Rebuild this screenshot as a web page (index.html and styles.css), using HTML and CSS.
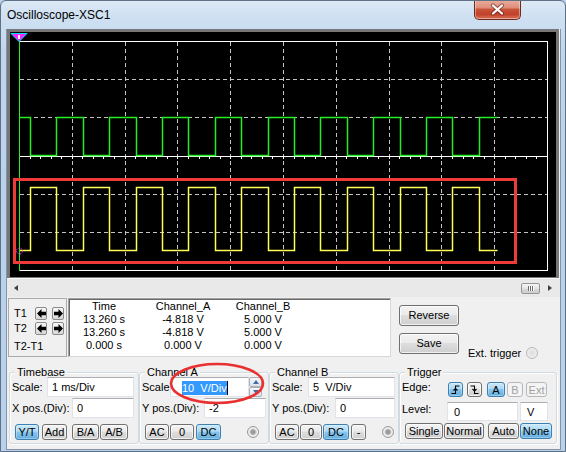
FILE: index.html
```html
<!DOCTYPE html>
<html>
<head>
<meta charset="utf-8">
<title>Oscilloscope-XSC1</title>
<link rel="stylesheet" href="styles.css">
</head>
<body>
<div class="window">
  <div class="titlebar">
    <span class="title">Oscilloscope-XSC1</span>
    <div class="close">
      <svg width="45" height="19" viewBox="0 0 45 19">
        <path d="M18 5.5 L27 13.5 M27 5.5 L18 13.5" stroke="#5a1c12" stroke-width="4.2" stroke-linecap="round" opacity="0.55" fill="none"/>
        <path d="M18 5.5 L27 13.5 M27 5.5 L18 13.5" stroke="#ffffff" stroke-width="2.2" stroke-linecap="round" fill="none"/>
      </svg>
    </div>
  </div>

  <div class="client">
    <div class="screen">
      <svg width="545" height="245" viewBox="0 0 545 245" shape-rendering="crispEdges">
        <g stroke="#c4c4c4" stroke-width="1" stroke-dasharray="4 3" fill="none">
          <path d="M62.5 10V238 M115.5 10V238 M167.5 10V238 M220.5 10V238 M273.5 10V238 M326.5 10V238 M379.5 10V238 M431.5 10V238 M484.5 10V238"/>
          <path d="M10 47.5H537 M10 85.5H537 M10 162.5H537 M10 200.5H537"/>
        </g>
        <path d="M9.5 124.5H537.5" stroke="#ffffff" stroke-width="1" fill="none"/>
        <path d="M9 126H537" stroke="#ffffff" stroke-width="2" stroke-dasharray="1 9.56" fill="none"/>
        <path d="M9.5 9.5H537.5V238.5H9.5" stroke="#ffffff" stroke-width="1" fill="none"/>
        <path d="M9.5 85.5H20.5V123.5H46.5V85.5H73.5V123.5H99.5V85.5H126.5V123.5H152.5V85.5H178.5V123.5H205.5V85.5H231.5V123.5H258.5V85.5H284.5V123.5H310.5V85.5H337.5V123.5H363.5V85.5H390.5V123.5H416.5V85.5H442.5V123.5H469.5V85.5H487.5" stroke="#22ee22" stroke-width="1.5" fill="none" shape-rendering="auto"/>
        <path d="M9.5 218.5H20.5V155.5H46.5V218.5H73.5V155.5H99.5V218.5H126.5V155.5H152.5V218.5H178.5V155.5H205.5V218.5H231.5V155.5H258.5V218.5H284.5V155.5H310.5V218.5H337.5V155.5H363.5V218.5H390.5V155.5H416.5V218.5H442.5V155.5H469.5V218.5H487.5" stroke="#ffff55" stroke-width="1.5" fill="none" shape-rendering="auto"/>
        <path d="M9.5 9V238.5" stroke="#22ee22" stroke-width="1" fill="none"/>
        <rect x="4.5" y="147" width="501" height="83.5" stroke="#f03a3a" stroke-width="3" fill="none"/>
        <circle cx="9.5" cy="219" r="3" stroke="#ff30ff" stroke-width="1" stroke-dasharray="1.5 1" fill="none" shape-rendering="auto"/>
        <polygon points="1,1.5 17,1.5 9,9.5" fill="#ff22ff" stroke="#00e0ff" stroke-width="1" shape-rendering="auto"/>
        <rect x="8" y="2.5" width="2" height="4" fill="#ffffff"/>
      </svg>
    </div>

    <div class="hscroll">
      <span class="sarrow left"></span>
      <span class="thumb"><i></i><i></i><i></i></span>
      <span class="sarrow right"></span>
    </div>

    <div class="panel">
      <div class="toprow">
        <div class="cursors">
          <div class="crow">
            <span class="clabel">T1</span>
            <span class="abtn"><svg width="9" height="9" viewBox="0 0 9 9"><polygon points="0,4.5 4.5,0 4.5,2.8 9,2.8 9,6.2 4.5,6.2 4.5,9" fill="#000"/></svg></span>
            <span class="abtn"><svg width="9" height="9" viewBox="0 0 9 9"><polygon points="9,4.5 4.5,0 4.5,2.8 0,2.8 0,6.2 4.5,6.2 4.5,9" fill="#000"/></svg></span>
          </div>
          <div class="crow">
            <span class="clabel">T2</span>
            <span class="abtn"><svg width="9" height="9" viewBox="0 0 9 9"><polygon points="0,4.5 4.5,0 4.5,2.8 9,2.8 9,6.2 4.5,6.2 4.5,9" fill="#000"/></svg></span>
            <span class="abtn"><svg width="9" height="9" viewBox="0 0 9 9"><polygon points="9,4.5 4.5,0 4.5,2.8 0,2.8 0,6.2 4.5,6.2 4.5,9" fill="#000"/></svg></span>
          </div>
          <div class="crow diff">T2-T1</div>
        </div>

        <div class="readout">
          <div class="rrow"><span>Time</span><span>Channel_A</span><span>Channel_B</span></div>
          <div class="rrow"><span>13.260 s</span><span>-4.818 V</span><span>5.000 V</span></div>
          <div class="rrow"><span>13.260 s</span><span>-4.818 V</span><span>5.000 V</span></div>
          <div class="rrow"><span>0.000 s</span><span>0.000 V</span><span>0.000 V</span></div>
        </div>

        <div class="actions">
          <div class="btn big">Reverse</div>
          <div class="btn big">Save</div>
        </div>

        <div class="ext">
          <span>Ext. trigger</span>
          <span class="radio"></span>
        </div>
      </div>

      <div class="groups">
        <div class="group">
          <div class="gtitle">Timebase</div>
          <div class="frow">
            <span class="lbl w35">Scale:</span>
            <span class="field w87">1 ms/Div</span>
          </div>
          <div class="frow">
            <span class="lbl w60">X pos.(Div):</span>
            <span class="field w62">0</span>
          </div>
          <div class="brow">
            <span class="btn on w24 ml3">Y/T</span>
            <span class="btn w25 ml3">Add</span>
            <span class="btn w27 ml5">B/A</span>
            <span class="btn w28 ml1">A/B</span>
          </div>
        </div>

        <div class="group">
          <div class="gtitle">Channel A</div>
          <div class="frow">
            <span class="lbl w28">Scale:</span>
            <span class="field sel w79"><span class="hl">10&nbsp; V/Div</span></span>
            <span class="spin">
              <span><svg width="6" height="4" viewBox="0 0 6 4"><polygon points="0,4 3,0 6,4" fill="#3d6fa6"/></svg></span>
              <span><svg width="6" height="4" viewBox="0 0 6 4"><polygon points="0,0 6,0 3,4" fill="#3d6fa6"/></svg></span>
            </span>
          </div>
          <div class="frow">
            <span class="lbl w62">Y pos.(Div):</span>
            <span class="field w62">-2</span>
          </div>
          <div class="brow">
            <span class="btn w24 ml3">AC</span>
            <span class="btn w24 ml1">0</span>
            <span class="btn on w25 ml2">DC</span>
            <span class="knob ml26"></span>
          </div>
        </div>

        <div class="group">
          <div class="gtitle">Channel B</div>
          <div class="frow">
            <span class="lbl w36">Scale:</span>
            <span class="field w87">5&nbsp; V/Div</span>
          </div>
          <div class="frow">
            <span class="lbl w63">Y pos.(Div):</span>
            <span class="field w60">0</span>
          </div>
          <div class="brow">
            <span class="btn w24 ml3">AC</span>
            <span class="btn w22 ml1">0</span>
            <span class="btn on w26 ml1">DC</span>
            <span class="btn w15 ml2">-</span>
            <span class="knob ml16"></span>
          </div>
        </div>

        <div class="group trig">
          <div class="gtitle">Trigger</div>
          <div class="frow edge">
            <span class="lbl w45 mid">Edge:</span>
            <span class="btn on e w15 ml1"><svg width="9" height="9" viewBox="0 0 9 9"><path d="M0.5 8.5H4.5V1H8.5 M2.5 5.5L4.5 3.5L6.5 5.5" stroke="#000" stroke-width="1.1" fill="none"/></svg></span>
            <span class="btn e w15 ml4"><svg width="9" height="9" viewBox="0 0 9 9"><path d="M0.5 1H4.5V8.5H8.5 M2.5 4L4.5 6L6.5 4" stroke="#000" stroke-width="1.1" fill="none"/></svg></span>
            <span class="btn on e w18 ml5">A</span>
            <span class="btn off e w16 ml2">B</span>
            <span class="btn off e w21 ml3">Ext</span>
          </div>
          <div class="frow level">
            <span class="lbl w45 top">Level:</span>
            <span class="field lv w71">0</span>
            <span class="field lv unit w28 ml2">V</span>
          </div>
          <div class="brow tb2">
            <span class="btn w38 ml3">Single</span>
            <span class="btn w40 ml1">Normal</span>
            <span class="btn w31 ml4">Auto</span>
            <span class="btn on w32 ml1">None</span>
          </div>
        </div>
      </div>
    </div>

    <svg class="mark" width="102" height="50" viewBox="0 0 102 50">
      <ellipse cx="51" cy="23.5" rx="46" ry="19.5" stroke="#e8302f" stroke-width="2.6" fill="none"/>
    </svg>
  </div>
</div>
</body>
</html>
```

FILE: styles.css
```css
* { box-sizing: border-box; }

html, body { margin: 0; padding: 0; }

body {
  width: 566px;
  height: 452px;
  overflow: hidden;
  background: #b9d1ea;
  font-family: "Liberation Sans", Arial, sans-serif;
  font-size: 11px;
  color: #000;
}

.window {
  width: 566px;
  height: 452px;
  border: 1px solid #5e7185;
  border-radius: 6px 6px 0 0;
  background: linear-gradient(180deg, #dce8f5 0px, #cfe0f2 16px, #c1d6ed 50px, #b9d1ea 200px, #b9d1ea 100%);
  padding: 0 4px 1px 5px;
  display: flex;
  flex-direction: column;
  overflow: hidden;
}

/* title bar */
.titlebar {
  flex: none;
  height: 28px;
  display: flex;
  align-items: flex-start;
  justify-content: space-between;
}
.title {
  font-size: 12px;
  line-height: 28px;
  padding-left: 1px;
}
.close {
  width: 47px;
  height: 20px;
  margin-top: -1px;
  margin-right: 40px;
  border: 1px solid #6b2b20;
  border-top: none;
  border-radius: 0 0 5px 5px;
  background: linear-gradient(180deg, #e9ae9f 0%, #de8e7a 40%, #c8533a 50%, #c0412a 75%, #d97258 100%);
  box-shadow: inset 0 0 0 1px rgba(255, 236, 230, 0.45);
}
.close svg { display: block; }

/* client area */
.client {
  position: relative;
  flex: none;
  height: 421px;
  border: 1px solid #8394a8;
  border-top: none;
  background: #f0f0f0;
  display: flex;
  flex-direction: column;
}

.screen {
  flex: none;
  height: 249px;
  margin-right: 1px;
  background: #000;
  border: 3px solid #777777;
  border-bottom-width: 1px;
}
.screen svg { display: block; }

.hscroll {
  flex: none;
  height: 19px;
  background: #e9e9e9;
  border-top: 1px solid #f8f8f8;
  display: flex;
  align-items: center;
  padding: 0 8px 0 7px;
}
.sarrow {
  width: 0;
  height: 0;
  border-top: 3.5px solid transparent;
  border-bottom: 3.5px solid transparent;
}
.sarrow.left { border-right: 4px solid #404040; }
.sarrow.right { border-left: 4px solid #404040; margin-left: 8px; }
.thumb {
  margin-left: auto;
  width: 19px;
  height: 11px;
  border: 1px solid #959595;
  border-radius: 2px;
  background: linear-gradient(180deg, #f5f5f5, #e4e4e4 50%, #d6d6d6 51%, #cfcfcf);
  display: flex;
  justify-content: center;
  align-items: center;
  gap: 0;
}
.thumb i {
  width: 2px;
  height: 5px;
  border-left: 1px solid #6d6d6d;
  border-right: 1px solid #fbfbfb;
}

/* lower panel */
.panel { flex: 1; padding-top: 1px; }

.toprow {
  display: flex;
  align-items: flex-start;
  height: 59px;
}

.cursors {
  flex: none;
  width: 59px;
  height: 59px;
  margin-left: 1px;
  border: 1px solid #ababab;
  padding: 8px 0 0 5px;
}
.crow {
  display: flex;
  align-items: center;
  height: 13px;
  line-height: 13px;
}
.crow + .crow { margin-top: 2px; }
.crow.diff { margin-top: 5px; }
.clabel { width: 21px; }
.abtn {
  width: 12px;
  height: 13px;
  border: 1px solid #8a8a8a;
  border-radius: 2px;
  background: linear-gradient(#f6f6f6, #d8d8d8);
  display: flex;
  align-items: center;
  justify-content: center;
}
.abtn + .abtn { margin-left: 5px; }
.abtn svg { display: block; }

.readout {
  flex: none;
  width: 323px;
  height: 59px;
  margin-left: 1px;
  background: #fff;
  border: 1px solid #a0a0a0;
  border-right-color: #d8d8d8;
  border-bottom-color: #d8d8d8;
  box-shadow: inset 1px 1px 0 #6a6a6a;
  padding-top: 1px;
}
.rrow {
  display: grid;
  grid-template-columns: 70px 88px 72px;
  height: 13px;
  line-height: 13px;
  text-align: center;
}

.actions {
  flex: none;
  width: 60px;
  margin-left: 8px;
  padding-top: 7px;
  display: flex;
  flex-direction: column;
  gap: 7px;
}

.ext {
  flex: none;
  margin-left: 9px;
  margin-top: 48px;
  height: 14px;
  display: flex;
  align-items: center;
  gap: 5px;
  line-height: 14px;
}
.radio {
  width: 12px;
  height: 12px;
  border-radius: 50%;
  border: 1px solid #b8b8b8;
  background: radial-gradient(circle, #dcdcdc 0, #e9e9e9 50%, #f7f7f7 100%);
}

/* buttons */
.btn {
  flex: none;
  height: 16px;
  border: 1px solid #707070;
  border-radius: 3px;
  background: linear-gradient(180deg, #f3f3f3 0%, #ebebeb 45%, #dddddd 50%, #cfcfcf 100%);
  box-shadow: inset 0 0 0 1px rgba(255, 255, 255, 0.7);
  text-align: center;
  line-height: 14px;
  display: flex;
  align-items: center;
  justify-content: center;
}
.btn.big { height: 21px; line-height: 19px; }
.btn.on {
  border-color: #3c7fb1;
  background: linear-gradient(180deg, #cbe8f9 0%, #acd9f4 45%, #88c5ec 50%, #64aedf 100%);
  box-shadow: inset 0 0 0 1px rgba(255, 255, 255, 0.3);
}
.btn.off {
  border-color: #b4b8bc;
  background: #f4f4f4;
  color: #a0a0a0;
  box-shadow: none;
}
.btn.e { height: 15px; }
.btn svg { display: block; }

/* group boxes */
.groups {
  display: flex;
  margin: 15px 0 0 2px;
}
.group {
  flex: none;
  width: 130px;
  height: 72px;
  border: 1px solid #d0dae1;
  border-radius: 3px;
  box-shadow: inset 1px 1px 0 #ffffff, 1px 1px 0 #ffffff;
  padding-left: 2px;
}
.group.trig { width: 158px; }
.gtitle {
  width: max-content;
  height: 13px;
  line-height: 13px;
  margin: -7px 0 -2px 3px;
  padding: 0 2px;
  background: #f0f0f0;
}
.frow {
  display: flex;
  align-items: center;
  height: 20px;
}
.frow + .frow { margin-top: 1px; }
.frow.edge { align-items: flex-end; }
.frow.level { margin-top: 5px; height: 19px; align-items: flex-start; }
.brow {
  display: flex;
  align-items: center;
  height: 16px;
  margin-top: 6px;
}
.brow.tb2 { margin-top: 2px; }

.lbl { flex: none; line-height: 14px; }
.lbl.mid { align-self: center; }
.lbl.top { align-self: flex-start; }

.field {
  flex: none;
  height: 20px;
  background: #fff;
  border: 1px solid #e2e3ea;
  border-top-color: #abadb3;
  padding-left: 4px;
  line-height: 18px;
  white-space: nowrap;
}
.field.lv { height: 19px; line-height: 18px; padding-left: 6px; }
.field.unit { padding-left: 6px; }
.field.sel { padding-left: 11px; }
.hl {
  display: inline-block;
  background: #3399ff;
  color: #fff;
  line-height: 14px;
  border-right: 1px solid #000;
  vertical-align: middle;
}

.spin {
  flex: none;
  width: 13px;
  height: 20px;
  display: flex;
  flex-direction: column;
}
.spin span {
  flex: 1;
  border: 1px solid #aab0b8;
  border-radius: 2px;
  background: linear-gradient(#f7f7f7, #dde2e8);
  display: flex;
  align-items: center;
  justify-content: center;
}
.spin svg { display: block; }

.knob {
  flex: none;
  width: 12px;
  height: 12px;
  border-radius: 50%;
  border: 1px solid #9a9a9a;
  background: radial-gradient(circle, #9c9c9c 0, #9c9c9c 2px, #cfcfcf 3px, #f4f4f4 4px, #dcdcdc 6px);
}

/* widths and spacing */
.w15 { width: 15px; }
.w16 { width: 16px; }
.w18 { width: 18px; }
.w21 { width: 21px; }
.w22 { width: 22px; }
.w24 { width: 24px; }
.w25 { width: 25px; }
.w26 { width: 26px; }
.w27 { width: 27px; }
.w28 { width: 28px; }
.w31 { width: 31px; }
.w32 { width: 32px; }
.w35 { width: 35px; }
.w36 { width: 36px; }
.w38 { width: 38px; }
.w40 { width: 40px; }
.w45 { width: 45px; }
.w60 { width: 60px; }
.w62 { width: 62px; }
.w63 { width: 63px; }
.w71 { width: 71px; }
.w79 { width: 79px; }
.w87 { width: 87px; }

.ml1 { margin-left: 1px; }
.ml2 { margin-left: 2px; }
.ml3 { margin-left: 3px; }
.ml4 { margin-left: 4px; }
.ml5 { margin-left: 5px; }
.ml16 { margin-left: 16px; }
.ml26 { margin-left: 26px; }

/* annotation over the Channel A scale box */
.mark {
  position: absolute;
  left: 159px;
  top: 331px;
  overflow: visible;
}
```
